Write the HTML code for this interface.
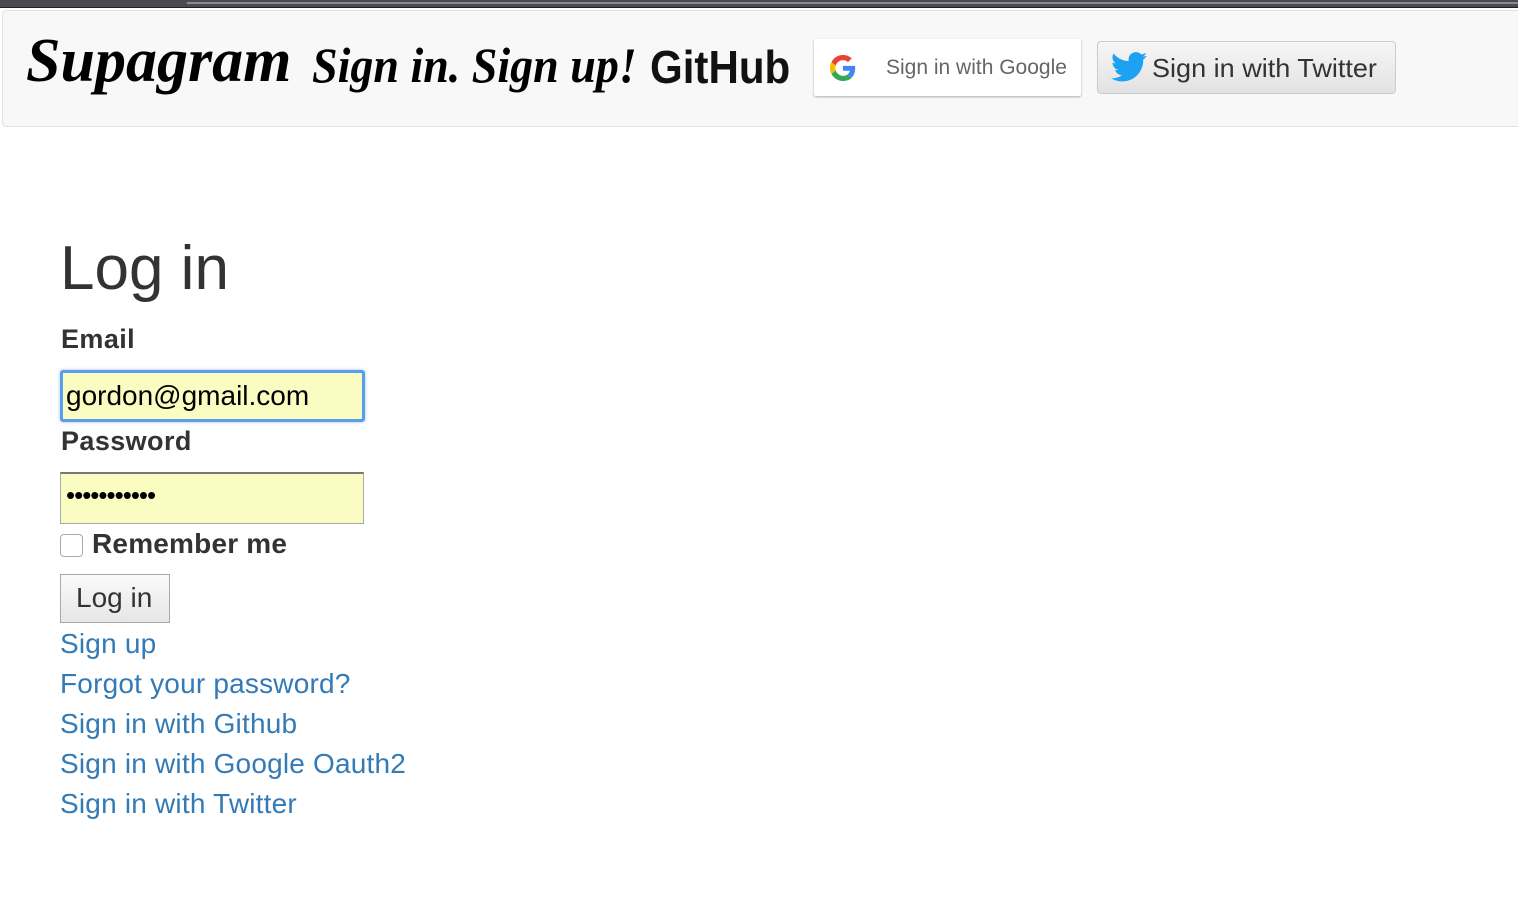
<!DOCTYPE html>
<html><head><meta charset="utf-8"><style>
body{margin:0;width:1518px;height:912px;background:#fff;font-family:"Liberation Sans",Arial,sans-serif;position:relative;overflow:hidden;color:#333}
.top{position:absolute;left:0;top:0;width:1518px;height:7px;background:#4a4a52;border-bottom:1px solid #222}
.top i{position:absolute;left:187px;top:2px;right:0;height:2px;background:#8a8a90}
.nav{position:absolute;left:2px;top:10px;width:1530px;height:115px;background:#f8f8f8;border:1px solid #e2e2e2;border-radius:4px}
.a{position:absolute;white-space:nowrap;color:#000}
.sc{font-family:"Liberation Serif",serif;font-style:italic;font-weight:bold;transform-origin:left top}
.gbtn{position:absolute;left:814px;top:39px;width:267px;height:57px;background:#fff;border-radius:2px;box-shadow:0 1px 2px rgba(0,0,0,.3)}
.tbtn{position:absolute;left:1097px;top:41px;width:297px;height:51px;border:1px solid #ccc;border-radius:4px;background:linear-gradient(#f6f6f6,#e2e2e2)}
h1{position:absolute;left:60px;top:233px;margin:0;font-size:62px;font-weight:normal;color:#333}
.lbl{position:absolute;left:61px;font-size:27px;letter-spacing:.4px;font-weight:bold;color:#333}
.inp{position:absolute;left:60px;width:300px;height:48px;background:#fafcc2;box-sizing:border-box}
.lnk{position:absolute;left:60px;font-size:28px;letter-spacing:.2px;color:#337ab7}
</style></head><body>
<div class="top"><i></i></div>
<div class="nav"></div>
<div class="a sc" style="left:26px;top:26px;font-size:62px;transform:scaleX(1.0)">Supagram</div>
<div class="a sc" style="left:312px;top:36px;font-size:50px;transform:scaleX(.92)">Sign in. Sign up!</div>
<div class="a" style="left:650px;top:40px;font-size:46px;font-weight:bold;transform:scaleX(.915);transform-origin:left top;color:#111">GitHub</div>
<div class="gbtn">
<svg style="position:absolute;left:16px;top:16px" width="26" height="26" viewBox="0 0 48 48"><path fill="#EA4335" d="M24 9.5c3.5 0 6.7 1.2 9.2 3.6l6.9-6.9C35.9 2.4 30.5 0 24 0 14.6 0 6.6 5.4 2.6 13.3l8 6.2C12.6 13.6 17.8 9.5 24 9.5z"/><path fill="#4285F4" d="M46.5 24.5c0-1.6-.1-3.1-.4-4.5H24v9h12.7c-.6 2.9-2.2 5.4-4.7 7.1l7.7 6c4.5-4.2 6.8-10.300 6.8-17.6z"/><path fill="#FBBC05" d="M10.5 28.6c-.5-1.4-.8-3-.8-4.6s.3-3.2.8-4.6l-8-6.2C.9 16.5 0 20.1 0 24s.9 7.5 2.6 10.8l7.9-6.2z"/><path fill="#34A853" d="M24 48c6.5 0 11.9-2.1 15.9-5.8l-7.7-6c-2.2 1.5-5 2.3-8.2 2.3-6.2 0-11.4-4.2-13.300-9.8l-8 6.2C6.6 42.6 14.6 48 24 48z"/></svg>
<div class="a" style="left:72px;top:17px;font-size:21px;color:#666">Sign in with Google</div></div>
<div class="tbtn">
<svg style="position:absolute;left:13px;top:10px" width="36" height="30" viewBox="0 0 24 20"><path fill="#1da1f2" d="M24 2.4c-.9.4-1.8.6-2.8.8 1-.6 1.8-1.6 2.2-2.7-1 .6-2 1-3.100 1.2C19.300.7 18 .1 16.600.1c-2.700 0-4.900 2.200-4.900 4.900 0 .4 0 .8.1 1.100C7.700 5.900 4.100 4 1.700 1 1.200 1.700 1 2.600 1 3.500c0 1.700.9 3.200 2.200 4.100-.8 0-1.600-.2-2.200-.6v.1c0 2.400 1.700 4.400 3.900 4.800-.4.1-.8.2-1.300.2-.3 0-.6 0-.9-.1.6 2 2.400 3.400 4.600 3.400-1.700 1.300-3.800 2.100-6.100 2.100-.4 0-.8 0-1.200-.1 2.200 1.400 4.800 2.200 7.500 2.200 9.100 0 14-7.500 14-14v-.6c1-.7 1.800-1.600 2.500-2.600z"/></svg>
<div class="a" style="left:54px;top:11px;font-size:26px;color:#333;transform:scaleX(1.04);transform-origin:left top">Sign in with Twitter</div></div>
<h1>Log in</h1>
<div class="lbl" style="top:324px">Email</div>
<div class="inp" style="top:370px;width:305px;height:52px;border:3px solid #5b9ded;border-radius:3px;box-shadow:0 0 3px #9cc3f5"></div>
<div class="a" style="left:66px;top:380px;font-size:28px">gordon@gmail.com</div>
<div class="lbl" style="top:426px">Password</div>
<div class="inp" style="top:472px;width:304px;height:52px;border:1px solid #aaa;border-top:2px solid #777"></div>
<div class="a" style="left:66px;top:480px;font-size:26px;letter-spacing:-1px">•••••••••••</div>
<div style="position:absolute;left:60px;top:534px;width:21px;height:21px;border:1px solid #aaa;border-radius:4px;background:#fff"></div>
<div class="lbl" style="left:92px;top:528px;font-size:28px;letter-spacing:.2px">Remember me</div>
<div style="position:absolute;left:60px;top:574px;width:110px;height:49px;border:1px solid #a9a9a9;background:linear-gradient(#fafafa,#e6e6e6);box-sizing:border-box"></div>
<div class="a" style="left:76px;top:582px;font-size:28px;color:#333">Log in</div>
<div class="lnk" style="top:628px">Sign up</div>
<div class="lnk" style="top:668px">Forgot your password?</div>
<div class="lnk" style="top:708px">Sign in with Github</div>
<div class="lnk" style="top:748px">Sign in with Google Oauth2</div>
<div class="lnk" style="top:788px">Sign in with Twitter</div>
</body></html>
